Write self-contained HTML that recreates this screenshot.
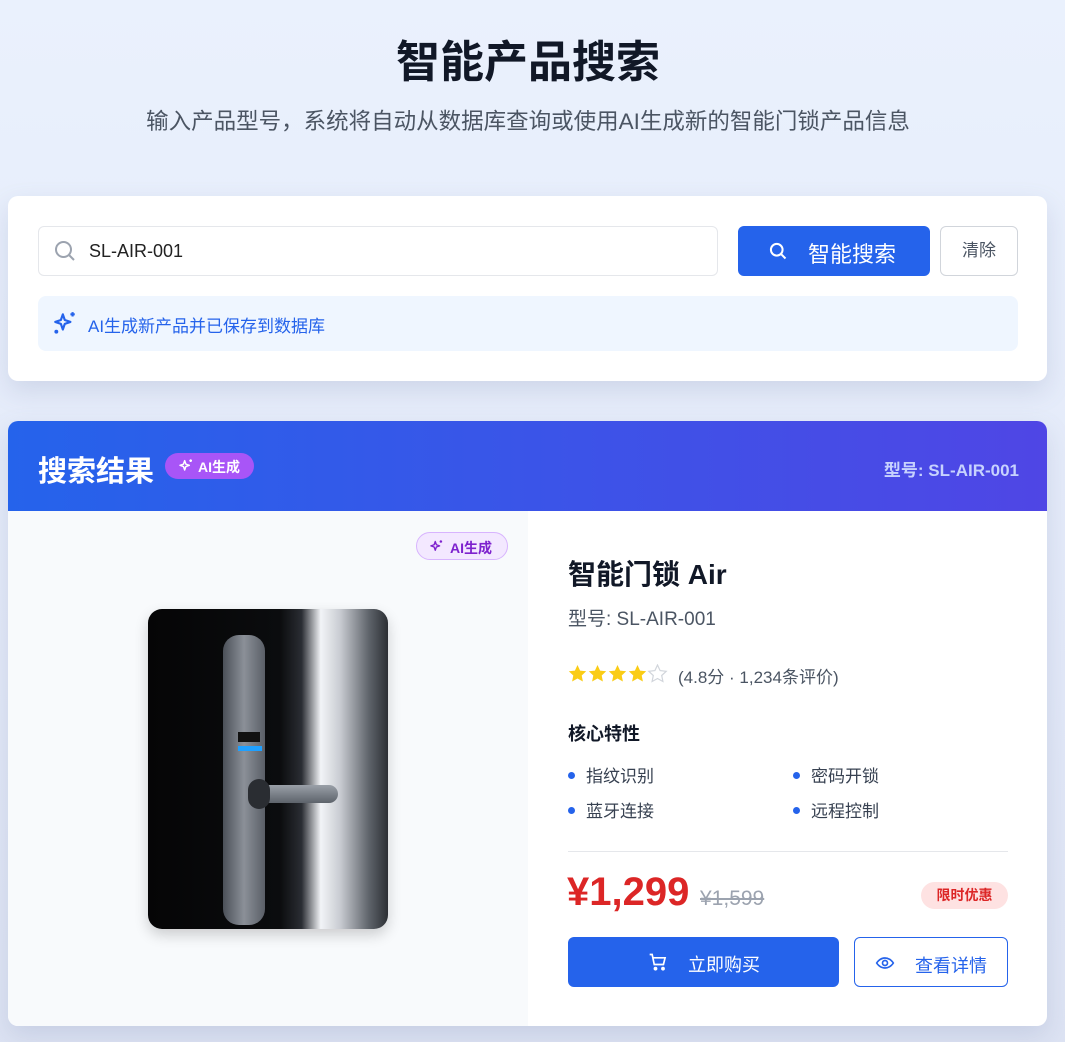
<!DOCTYPE html>
<html><head><meta charset="utf-8"><style>
*{box-sizing:border-box;margin:0;padding:0}
body{width:1065px;height:1042px;overflow:hidden;font-family:"Liberation Sans","Noto Sans CJK SC",sans-serif;background:linear-gradient(180deg,#eaf1fd 0%,#e3e9f8 60%,#dde3f3 100%);position:relative;color:#111827}
.abs{position:absolute}
h1{position:absolute;top:26px;left:0;width:1056px;text-align:center;font-size:44px;font-weight:700;color:#111827}
.sub{top:104px;left:0;width:1056px;text-align:center;font-size:22.5px;color:#4b5563}
.card1{left:8px;top:196px;width:1039px;height:185px;background:#fff;border-radius:10px;box-shadow:0 10px 25px rgba(100,116,160,.18)}
.inp{left:38px;top:226px;width:680px;height:50px;border:1px solid #e5e7eb;border-radius:6px;font-size:18px;color:#222;padding:14px 0 0 50px}
.btn{left:738px;top:226px;width:192px;height:50px;background:#2563eb;border-radius:6px;color:#fff;font-size:22px}
.clr{left:940px;top:226px;width:78px;height:50px;border:1px solid #d1d5db;border-radius:6px;color:#4b5563;font-size:17px;text-align:center;line-height:48px}
.note{left:38px;top:296px;width:980px;height:55px;background:#eff6ff;border-radius:8px;color:#2563eb;font-size:17px;padding:16px 0 0 50px}
.card2{left:8px;top:421px;width:1039px;height:605px;background:#fff;border-radius:10px;overflow:hidden;box-shadow:0 10px 25px rgba(100,116,160,.18)}
.hd{left:0;top:0;width:1039px;height:90px;background:linear-gradient(90deg,#2563eb,#4f46e5)}
.left{left:0;top:90px;width:520px;height:515px;background:#f8fafc}
.feat{font-size:17px;color:#374151}
.feat span{display:inline-block;width:7px;height:7px;border-radius:50%;background:#2563eb;margin-right:11px;vertical-align:middle;position:relative;top:-2px}
</style></head><body>
<h1>智能产品搜索</h1>
<div class="abs sub">输入产品型号，系统将自动从数据库查询或使用AI生成新的智能门锁产品信息</div>
<div class="abs card1"></div>
<div class="abs inp">SL-AIR-001</div>
<svg class="abs" style="left:53px;top:239px" width="24" height="24" viewBox="0 0 24 24" fill="none" stroke="#9ca3af" stroke-width="2"><circle cx="10.5" cy="10.5" r="7.5"/><path d="M16 16l5 5"/></svg>
<div class="abs btn"><svg style="position:absolute;left:30px;top:15px" width="20" height="20" viewBox="0 0 24 24" fill="none" stroke="#fff" stroke-width="2.4"><circle cx="10.5" cy="10.5" r="7"/><path d="M16 16l5 5"/></svg><span style="position:absolute;left:70px;top:11px">智能搜索</span></div>
<div class="abs clr">清除</div>
<div class="abs note">AI生成新产品并已保存到数据库</div>
<svg class="abs" style="left:52px;top:310px" width="26" height="26" viewBox="0 0 24 24" fill="none" stroke="#2563eb" stroke-width="2" stroke-linejoin="round"><path d="M10 4l1.8 5.2L17 11l-5.2 1.8L10 18l-1.8-5.2L3 11l5.2-1.8z"/><path d="M19 2v4M17 4h4"/><circle cx="4" cy="20" r=".8" fill="#2563eb"/></svg>
<div class="abs card2">
 <div class="abs hd">
  <div class="abs" style="left:30px;top:27px;font-size:29px;font-weight:700;color:#fff">搜索结果</div>
  <div class="abs" style="left:157px;top:32px;width:89px;height:26px;border-radius:13px;background:#a855f7;color:#fff;font-size:14px;font-weight:700;padding:4px 0 0 33px">AI生成</div>
  <svg class="abs" style="left:170px;top:37px" width="16" height="16" viewBox="0 0 24 24" fill="none" stroke="#fff" stroke-width="2.2" stroke-linejoin="round"><path d="M10 4l1.8 5.2L17 11l-5.2 1.8L10 18l-1.8-5.2L3 11l5.2-1.8z"/><path d="M19 2v4M17 4h4"/></svg>
  <div class="abs" style="right:28px;top:35px;font-size:17px;font-weight:700;color:#c7d2fe">型号: SL-AIR-001</div>
 </div>
 <div class="abs left">
  <div class="abs" style="left:408px;top:21px;width:92px;height:28px;border-radius:14px;background:#f3e8ff;border:1px solid #d8b4fe;color:#7e22ce;font-size:14px;font-weight:700;padding:5px 0 0 33px">AI生成</div>
  <svg class="abs" style="left:421px;top:28px" width="15" height="15" viewBox="0 0 24 24" fill="none" stroke="#7e22ce" stroke-width="2.2" stroke-linejoin="round"><path d="M10 4l1.8 5.2L17 11l-5.2 1.8L10 18l-1.8-5.2L3 11l5.2-1.8z"/><path d="M19 2v4M17 4h4"/></svg>
  <div class="abs" style="left:140px;top:98px;width:240px;height:320px;border-radius:14px;overflow:hidden;box-shadow:0 6px 14px rgba(0,0,0,.18);background:linear-gradient(90deg,#050506 0%,#0b0c0e 55%,#2a2d33 64%,#f2f4f7 72%,#c9ccd2 80%,#5f646b 92%,#2c2f34 100%)">
   <div class="abs" style="left:75px;top:26px;width:42px;height:290px;border-radius:16px;background:linear-gradient(90deg,#4b5058,#8b9098,#5a5f67)"></div>
   <div class="abs" style="left:90px;top:123px;width:22px;height:10px;background:#111"></div>
   <div class="abs" style="left:90px;top:137px;width:24px;height:5px;background:#1fa0ff"></div>
   <div class="abs" style="left:102px;top:176px;width:88px;height:18px;border-radius:9px;background:linear-gradient(180deg,#9aa0a8,#5d636b)"></div>
   <div class="abs" style="left:100px;top:170px;width:22px;height:30px;border-radius:11px;background:#2a2d32"></div>
  </div>
 </div>
 <div class="abs" style="left:560px;top:132px;font-size:28px;font-weight:700">智能门锁 Air</div>
 <div class="abs" style="left:560px;top:183px;font-size:19px;color:#4b5563">型号: SL-AIR-001</div>
 <svg class="abs" style="left:560px;top:243px" width="100" height="20" viewBox="0 0 100 20">
  <defs><path id="s" d="M9.5 1l2.6 5.6 6.1.7-4.5 4.2 1.2 6-5.4-3-5.4 3 1.2-6L.8 7.3l6.1-.7z"/></defs>
  <use href="#s" x="0" fill="#facc15"/><use href="#s" x="20" fill="#facc15"/><use href="#s" x="40" fill="#facc15"/><use href="#s" x="60" fill="#facc15"/><use href="#s" x="80" fill="none" stroke="#d1d5db" stroke-width="1.2"/>
 </svg>
 <div class="abs" style="left:670px;top:242px;font-size:17px;color:#4b5563">(4.8分 · 1,234条评价)</div>
 <div class="abs" style="left:560px;top:299px;font-size:18px;font-weight:700">核心特性</div>
 <div class="abs feat" style="left:560px;top:341px"><span></span>指纹识别</div>
 <div class="abs feat" style="left:785px;top:341px"><span></span>密码开锁</div>
 <div class="abs feat" style="left:560px;top:376px"><span></span>蓝牙连接</div>
 <div class="abs feat" style="left:785px;top:376px"><span></span>远程控制</div>
 <div class="abs" style="left:560px;top:430px;width:440px;height:1px;background:#e5e7eb"></div>
 <div class="abs" style="left:559px;top:449px;font-size:40px;font-weight:700;color:#dc2626">¥1,299</div>
 <div class="abs" style="left:692px;top:466px;font-size:21px;color:#9ca3af;text-decoration:line-through">¥1,599</div>
 <div class="abs" style="left:913px;top:461px;width:87px;height:27px;border-radius:14px;background:#fee2e2;color:#dc2626;font-size:14px;font-weight:700;text-align:center;line-height:27px">限时优惠</div>
 <div class="abs" style="left:560px;top:516px;width:271px;height:50px;border-radius:6px;background:#2563eb;color:#fff;font-size:18px">
  <svg style="position:absolute;left:80px;top:15px" width="20" height="20" viewBox="0 0 24 24" fill="none" stroke="#fff" stroke-width="2"><path d="M2 3h3l2.5 12h11l2-8H6.5"/><circle cx="9" cy="20" r="1.3" fill="#fff"/><circle cx="18" cy="20" r="1.3" fill="#fff"/></svg>
  <span style="position:absolute;left:120px;top:14px">立即购买</span></div>
 <div class="abs" style="left:846px;top:516px;width:154px;height:50px;border-radius:6px;border:1px solid #2563eb;color:#2563eb;font-size:18px">
  <svg style="position:absolute;left:20px;top:15px" width="20" height="20" viewBox="0 0 24 24" fill="none" stroke="#2563eb" stroke-width="2"><path d="M2 12s3.5-6 10-6 10 6 10 6-3.5 6-10 6S2 12 2 12z"/><circle cx="12" cy="12" r="3"/></svg>
  <span style="position:absolute;left:60px;top:14px">查看详情</span></div>
</div>
</body></html>
